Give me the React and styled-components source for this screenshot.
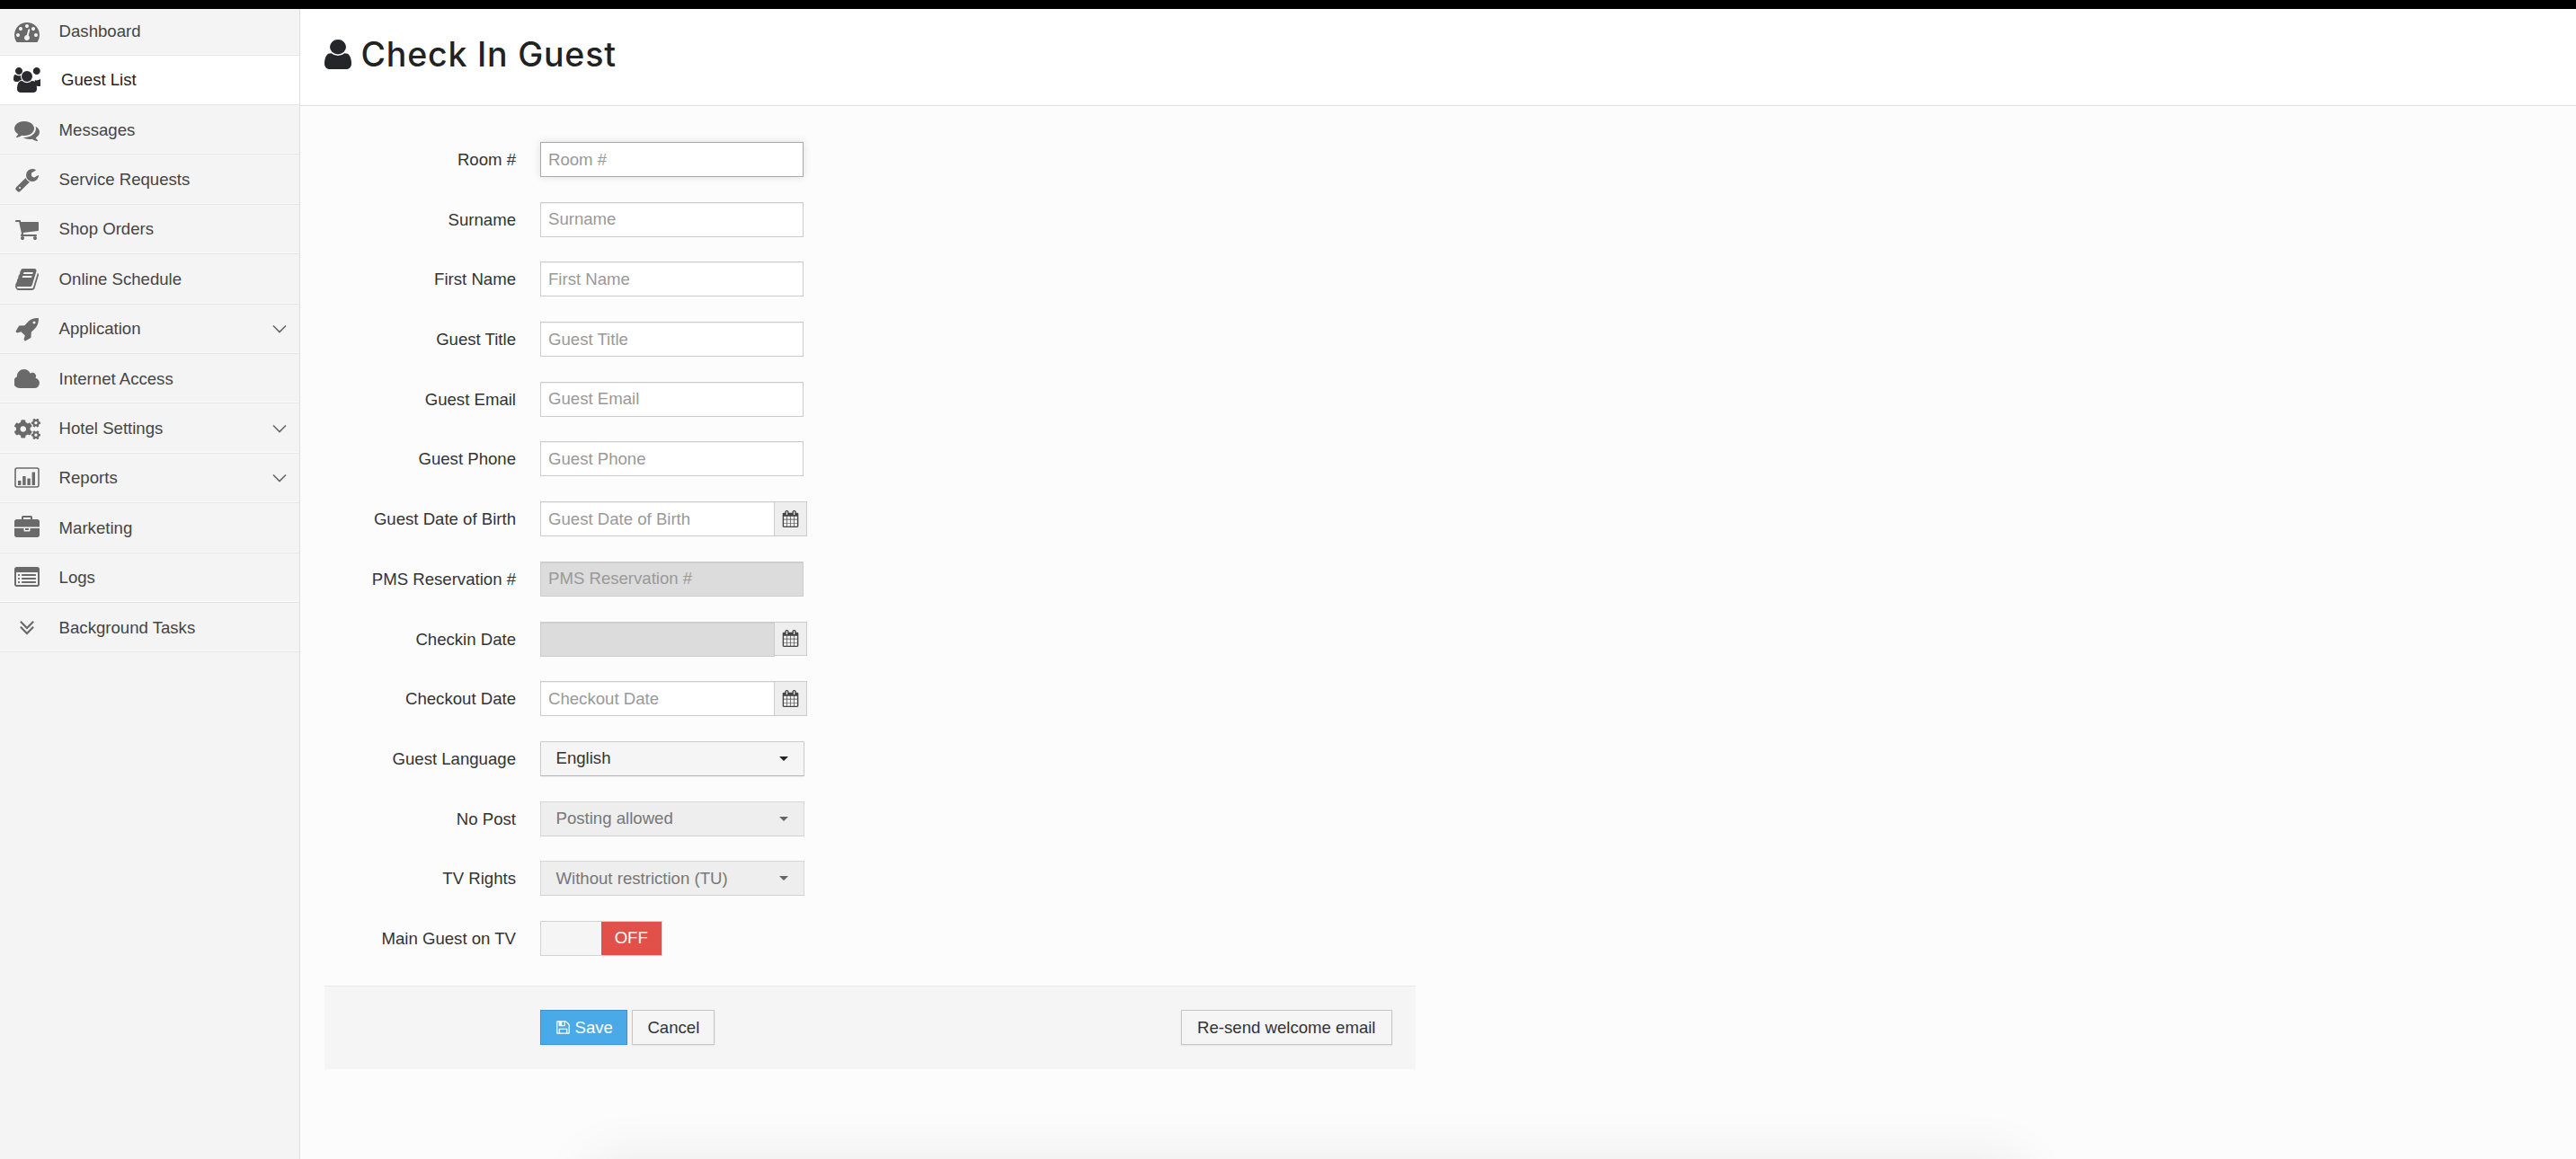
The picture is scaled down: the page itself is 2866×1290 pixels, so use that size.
import React from "react";
import styled, { createGlobalStyle } from "styled-components";
import { FaCogs } from "react-icons/fa";

const Global = createGlobalStyle`
  html, body { margin: 0; padding: 0; height: 100%; background: #fcfcfc; }
  * { box-sizing: border-box; }
  body { font-family: "Liberation Sans", Arial, sans-serif; font-size: 18.6px; color: #333; overflow: hidden; }
`;

const Page = styled.div`
  position: relative;
  height: 1290px;
  display: flex;
  flex-direction: column;
  overflow: hidden;
`;
const TopBar = styled.div`
  height: 10px;
  background: #000;
  flex: none;
`;
const Body = styled.div`
  flex: 1;
  display: flex;
  min-height: 0;
`;
const Sidebar = styled.nav`
  width: 334px;
  flex: none;
  background: #f4f4f4;
  border-right: 1px solid #dfdfdf;
`;
const NavItem = styled.a`
  display: flex;
  align-items: center;
  height: ${(p) => (p.$first ? "51.6px" : "55.4px")};
  background: ${(p) => (p.$active ? "#fff" : "transparent")};
  color: ${(p) => (p.$active ? "#222" : "#444")};
  border-bottom: 1px solid #e6e6e6;
  box-shadow: inset 0 -1px 0 ${(p) => (p.$active ? "#fff" : "#f9f9f9")};
  padding-top: ${(p) => (p.$first ? "0" : "1px")};
  font-size: 18.6px;
`;
const NavIconBox = styled.span`
  width: 60px;
  flex: none;
  display: flex;
  justify-content: center;
  color: ${(p) => (p.$active ? "#2a2a2e" : "#6a6a6a")};
`;
const NavLabel = styled.span`
  flex: 1;
  padding-left: ${(p) => (p.$active ? "8px" : "5.6px")};
`;
const Chevron = styled.svg`
  width: 16px;
  height: 10px;
  margin-right: 14px;
  fill: none;
  stroke: #666;
  stroke-width: 1.6;
`;
const Main = styled.main`
  flex: 1;
  min-width: 0;
  display: flex;
  flex-direction: column;
`;
const Header = styled.header`
  height: 108px;
  flex: none;
  background: #fff;
  border-bottom: 1px solid #e1e1e1;
  display: flex;
  align-items: center;
  padding: 0 0 6px 26.5px;
  color: #25262a;
`;
const HeaderGlyph = styled.svg`
  width: 30px;
  height: 33px;
  flex: none;
  fill: currentColor;
`;
const Title = styled.h1`
  margin: 0 0 0 11px;
  font-family: "Inter", "Liberation Sans", sans-serif;
  font-size: 37.5px;
  font-weight: 500;
  line-height: 1;
  letter-spacing: 0.8px;
  color: #222;
`;
const Form = styled.form`
  width: 1214px;
  margin: 40px 0 0 27px;
`;
const Row = styled.div`
  display: flex;
  align-items: center;
  height: 39px;
  margin-bottom: 27.7px;
`;
const Label = styled.label`
  width: 213px;
  margin-right: 27px;
  padding-top: 1px;
  flex: none;
  text-align: right;
  color: #333;
`;
const TextInput = styled.input`
  width: ${(p) => (p.$group ? "261px" : "293px")};
  height: 39px;
  padding: 0 8px;
  font: inherit;
  color: #333;
  background: ${(p) => (p.disabled ? "#dcdcdc" : "#fff")};
  border: 1px solid ${(p) => (p.$focus ? "#a9a9a9" : "#ccc")};
  border-radius: 0;
  outline: none;
  box-shadow: ${(p) =>
    p.$focus ? "0 0 9px rgba(0,0,0,.12)" : "inset 0 1px 1px rgba(0,0,0,.06)"};
  &::placeholder { color: #999; opacity: 1; }
`;
const InputGroup = styled.div`
  display: flex;
  align-items: flex-start;
`;
const Addon = styled.span`
  width: 36px;
  height: 38.7px;
  display: flex;
  align-items: center;
  justify-content: center;
  background: #eee;
  border: 1px solid #ccc;
  border-left: none;
  color: #444;
`;
const Select = styled.button`
  width: 293.5px;
  height: 39px;
  display: flex;
  align-items: center;
  justify-content: space-between;
  padding: 0 17px 0 16.5px;
  font: inherit;
  background: ${(p) => (p.disabled ? "#eee" : "#f5f5f5")};
  color: ${(p) => (p.disabled ? "#777" : "#333")};
  border: 1px solid ${(p) => (p.disabled ? "#d6d6d6" : "#ccc")};
  border-bottom-color: ${(p) => (p.disabled ? "#d0d0d0" : "#b5b5b5")};
  box-shadow: ${(p) => (p.disabled ? "none" : "0 1px 2px rgba(0,0,0,.05)")};
`;
const Caret = styled.span`
  width: 0;
  height: 0;
  border-left: 5px solid transparent;
  border-right: 5px solid transparent;
  border-top: 5px solid ${(p) => (p.$muted ? "#666" : "#222")};
`;
const Toggle = styled.div`
  width: 135.5px;
  height: 39px;
  display: flex;
  border: 1px solid #d2d2d2;
  background: #f5f5f5;
`;
const ToggleOff = styled.span`
  margin-left: auto;
  width: 66.5px;
  background: #e2504a;
  color: #fff;
  display: flex;
  align-items: center;
  justify-content: center;
`;
const Footer = styled.div`
  display: flex;
  align-items: center;
  height: 93px;
  margin-top: 33px;
  padding: 0 26.5px 0 240px;
  background: #f5f5f5;
  border-top: 1px solid #e8e8e8;
`;
const Button = styled.button`
  height: 39px;
  padding: 0 ${(p) => (p.$primary ? "15.5px" : p.$right ? "17px" : "16px")};
  display: inline-flex;
  align-items: center;
  gap: 5px;
  font: inherit;
  color: ${(p) => (p.$primary ? "#fff" : "#333")};
  background: ${(p) => (p.$primary ? "#4aa9e7" : "#f5f5f5")};
  border: 1px solid ${(p) => (p.$primary ? "#3d92d0" : "#c6c6c6")};
  border-radius: 0;
  box-shadow: 0 1px 2px rgba(0,0,0,.08);
  margin-right: ${(p) => (p.$gap ? "5px" : "0")};
  margin-left: ${(p) => (p.$right ? "auto" : "0")};
`;
const WindowShadow = styled.div`
  position: absolute;
  left: 665px;
  right: 625px;
  top: 1305px;
  height: 40px;
  border-radius: 40px;
  box-shadow: 0 0 60px 18px rgba(0,0,0,.07);
`;

const P = {
  dashboard: ["0 0 1792 1792", "M384 1152q0-53-37.5-90.5t-90.5-37.5-90.5 37.5-37.5 90.5 37.5 90.5 90.5 37.5 90.5-37.5 37.5-90.5zm192-448q0-53-37.5-90.5t-90.5-37.5-90.5 37.5-37.5 90.5 37.5 90.5 90.5 37.5 90.5-37.5 37.5-90.5zm428 481l101-382q6-26-7.5-48.5t-38.5-29.5-48 6.5-30 39.5l-101 382q-60 5-107 43.5t-63 98.5q-20 77 20 146t117 89 146-20 89-117q16-60-6-117t-72-91zm660-33q0-53-37.5-90.5t-90.5-37.5-90.5 37.5-37.5 90.5 37.5 90.5 90.5 37.5 90.5-37.5 37.5-90.5zm-640-640q0-53-37.5-90.5t-90.5-37.5-90.5 37.5-37.5 90.5 37.5 90.5 90.5 37.5 90.5-37.5 37.5-90.5zm448 192q0-53-37.5-90.5t-90.5-37.5-90.5 37.5-37.5 90.5 37.5 90.5 90.5 37.5 90.5-37.5 37.5-90.5zm320 448q0 261-141 483-19 29-54 29h-1402q-35 0-54-29-141-221-141-483 0-182 71-348t191-286 286-191 348-71 348 71 286 191 191 286 71 348z"],
  users: ["0 0 1920 1792", "M593 896q-162 5-265 128h-134q-82 0-138-40.5t-56-118.5q0-353 124-353 6 0 43.5 21t97.5 42.5 119 21.5q67 0 133-23-5 37-5 66 0 139 81 256zm1071 637q0 120-73 189.5t-194 69.5h-874q-121 0-194-69.5t-73-189.5q0-53 3.5-103.5t14-109 26.5-108.5 43-97.5 62-81 85.5-53.5 111.5-20q10 0 43 21.5t73 48 107 48 135 21.5 135-21.5 107-48 73-48 43-21.5q61 0 111.5 20t85.5 53.5 62 81 43 97.5 26.5 108.5 14 109 3.5 103.5zm-1024-1277q0 106-75 181t-181 75-181-75-75-181 75-181 181-75 181 75 75 181zm704 384q0 159-112.5 271.5t-271.5 112.5-271.5-112.5-112.5-271.5 112.5-271.5 271.5-112.5 271.5 112.5 112.5 271.5zm688 549q0 78-56 118.5t-138 40.5h-134q-103-123-265-128 81-117 81-256 0-29-5-66 66 23 133 23 59 0 119-21.5t97.5-42.5 43.5-21q124 0 124 353zm-128-933q0 106-75 181t-181 75-181-75-75-181 75-181 181-75 181 75 75 181z"],
  comments: ["0 0 1792 1792", "M1408 768q0 139-94 257t-256.5 186.5-353.5 68.5q-86 0-176-16-124 88-278 128-36 9-86 16h-3q-11 0-20.5-8t-11.5-21q-1-3-1-6.5t.5-6.5 2-6l2.5-5 3.5-5.5 4-5 4.5-5 4-4.5q5-6 23-25t26-29.5 22.5-29 25-38.5 20.5-44q-124-72-195-177t-71-224q0-139 94-257t256.5-186.5 353.5-68.5 353.5 68.5 256.5 186.5 94 257zm384 256q0 120-71 224.5t-195 176.5q10 24 20.5 44t25 38.5 22.5 29 26 29.5 23 25q1 1 4 4.5t4.5 5 4 5 3.5 5.5l2.5 5 2 6 .5 6.5-1 6.5q-3 14-13 22t-22 7q-50-7-86-16-154-40-278-128-90 16-176 16-271 0-472-132 58 4 88 4 161 0 309-45t264-129q125-92 192-212t67-254q0-77-23-152 129 71 204 178t75 230z"],
  wrench: ["0 0 1792 1792", "M448 1472q0-26-19-45t-45-19-45 19-19 45 19 45 45 19 45-19 19-45zm644-420l-682 682q-37 37-90 37-52 0-91-37l-106-108q-38-36-38-90 0-53 38-91l681-681q39 98 114.5 173.5t173.5 114.5zm634-435q0 39-23 106-47 134-164.5 217.5t-258.5 83.5q-185 0-316.5-131.5t-131.5-316.5 131.5-316.5 316.5-131.5q58 0 121.5 16.5t107.5 46.5q16 11 16 28t-16 28l-293 169v224l193 107q5-3 79-48.5t135.5-81 70.5-35.5q15 0 23.5 10t8.5 25z"],
  cart: ["0 0 1792 1792", "M704 1536q0 52-38 90t-90 38-90-38-38-90 38-90 90-38 90 38 38 90zm896 0q0 52-38 90t-90 38-90-38-38-90 38-90 90-38 90 38 38 90zm128-1088v512q0 24-16.5 42.5t-40.5 21.5l-1044 122q13 60 13 70 0 16-24 64h920q26 0 45 19t19 45-19 45-45 19h-1024q-26 0-45-19t-19-45q0-11 8-31.5t16-36 21.5-40 15.5-29.5l-177-823h-204q-26 0-45-19t-19-45 19-45 45-19h256q16 0 28.5 6.5t19.5 15.5 13 24.5 8 26 5.5 29.5 4.5 26h1201q26 0 45 19t19 45z"],
  book: ["0 0 1792 1792", "M1703 478q40 57 18 129l-275 906q-19 64-76.5 107.5t-122.5 43.5h-923q-77 0-148.5-53.5t-99.5-131.5q-24-67-2-127 0-4 3-27t4-37q1-8-3-21.5t-3-19.5q2-11 8-21t16.5-23.5 16.5-23.5q23-38 45-91.5t30-91.5q3-10 .5-30t-.5-28q3-11 17-28t17-23q21-36 42-92t25-90q1-9-2.5-32t.5-28q4-13 22-30.5t22-22.5q19-26 42.5-84.5t27.5-96.5q1-8-3-25.5t-2-26.5q2-8 9-18t18-23 17-21q8-12 16.5-30.5t15-35 16-36 19.5-32 26.5-23.5 36-11.5 47.5 5.5l-1 3q38-9 51-9h761q74 0 114 56t18 130l-274 906q-36 119-71.5 153.5t-128.5 34.5h-869q-27 0-38 15-11 16-1 43 24 70 144 70h923q29 0 56-15.5t35-41.5l300-987q7-22 5-57 38 15 59 43zm-1064 2q-4 13 2 22.5t20 9.5h608q13 0 25.5-9.5t16.5-22.5l21-64q4-13-2-22.5t-20-9.5h-608q-13 0-25.5 9.5t-16.5 22.5zm-83 256q-4 13 2 22.5t20 9.5h608q13 0 25.5-9.5t16.5-22.5l21-64q4-13-2-22.5t-20-9.5h-608q-13 0-25.5 9.5t-16.5 22.5z"],
  rocket: ["0 0 1792 1792", "M1504 448q0-40-28-68t-68-28-68 28-28 68 28 68 68 28 68-28 28-68zm224-288q0 249-75.5 430.5t-253.5 360.5q-81 80-195 176l-20 379q-2 16-16 26l-384 224q-7 4-16 4-12 0-23-9l-64-64q-13-14-8-32l85-276-281-281-276 85q-3 1-9 1-14 0-23-9l-64-64q-17-19-5-39l224-384q10-14 26-16l379-20q96-114 176-195 188-187 358-258t431-71q14 0 24 9.5t10 22.5z"],
  cloud: ["0 0 1920 1792", "M1856 1216q0 159-112.5 271.5t-271.5 112.5h-1088q-185 0-316.5-131.5t-131.5-316.5q0-132 71-241.5t187-163.5q-2-28-2-43 0-212 150-362t362-150q158 0 286.5 88t187.5 230q70-62 166-62 106 0 181 75t75 181q0 75-41 138 129 30 213 134.5t84 239.5z"],
  briefcase: ["0 0 1792 1792", "M640 256h512v-128h-512v128zm1152 640v480q0 66-47 113t-113 47h-1472q-66 0-113-47t-47-113v-480h672v160q0 26 19 45t45 19h320q26 0 45-19t19-45v-160h672zm-768 0v128h-256v-128h256zm768-480v384h-1792v-384q0-66 47-113t113-47h352v-160q0-40 28-68t68-28h576q40 0 68 28t28 68v160h352q66 0 113 47t47 113z"],
  list: ["0 0 1792 1792", "M384 1184v64q0 13-9.5 22.5t-22.5 9.5h-64q-13 0-22.5-9.5t-9.5-22.5v-64q0-13 9.5-22.5t22.5-9.5h64q13 0 22.5 9.5t9.5 22.5zm0-256v64q0 13-9.5 22.5t-22.5 9.5h-64q-13 0-22.5-9.5t-9.5-22.5v-64q0-13 9.5-22.5t22.5-9.5h64q13 0 22.5 9.5t9.5 22.5zm0-256v64q0 13-9.5 22.5t-22.5 9.5h-64q-13 0-22.5-9.5t-9.5-22.5v-64q0-13 9.5-22.5t22.5-9.5h64q13 0 22.5 9.5t9.5 22.5zm1152 512v64q0 13-9.5 22.5t-22.5 9.5h-960q-13 0-22.5-9.5t-9.5-22.5v-64q0-13 9.5-22.5t22.5-9.5h960q13 0 22.5 9.5t9.5 22.5zm0-256v64q0 13-9.5 22.5t-22.5 9.5h-960q-13 0-22.5-9.5t-9.5-22.5v-64q0-13 9.5-22.5t22.5-9.5h960q13 0 22.5 9.5t9.5 22.5zm0-256v64q0 13-9.5 22.5t-22.5 9.5h-960q-13 0-22.5-9.5t-9.5-22.5v-64q0-13 9.5-22.5t22.5-9.5h960q13 0 22.5 9.5t9.5 22.5zm128 704v-832q0-13-9.5-22.5t-22.5-9.5h-1472q-13 0-22.5 9.5t-9.5 22.5v832q0 13 9.5 22.5t22.5 9.5h1472q13 0 22.5-9.5t9.5-22.5zm128-1088v1088q0 66-47 113t-113 47h-1472q-66 0-113-47t-47-113v-1088q0-66 47-113t113-47h1472q66 0 113 47t47 113z"],
  doubleDown: ["0 0 1792 1792", "M1395 864q0 13-10 23l-466 466q-10 10-23 10t-23-10l-466-466q-10-10-10-23t10-23l50-50q10-10 23-10t23 10l393 393 393-393q10-10 23-10t23 10l50 50q10 10 10 23zm0-384q0 13-10 23l-466 466q-10 10-23 10t-23-10l-466-466q-10-10-10-23t10-23l50-50q10-10 23-10t23 10l393 393 393-393q10-10 23-10t23 10l50 50q10 10 10 23z"],
  calendar: ["0 0 1792 1792", "M192 1664h288v-288h-288v288zm352 0h320v-288h-320v288zm-352-352h288v-320h-288v320zm352 0h320v-320h-320v320zm-352-384h288v-288h-288v288zm736 736h320v-288h-320v288zm-384-736h320v-288h-320v288zm768 736h288v-288h-288v288zm-384-352h320v-320h-320v320zm-352-864v-288q0-13-9.5-22.5t-22.5-9.5h-64q-13 0-22.5 9.5t-9.5 22.5v288q0 13 9.5 22.5t22.5 9.5h64q13 0 22.5-9.5t9.5-22.5zm736 864h288v-320h-288v320zm-384-384h320v-288h-320v288zm384 0h288v-288h-288v288zm32-480v-288q0-13-9.5-22.5t-22.5-9.5h-64q-13 0-22.5 9.5t-9.5 22.5v288q0 13 9.5 22.5t22.5 9.5h64q13 0 22.5-9.5t9.5-22.5zm384-64v1280q0 52-38 90t-90 38h-1408q-52 0-90-38t-38-90v-1280q0-52 38-90t90-38h128v-96q0-66 47-113t113-47h64q66 0 113 47t47 113v96h384v-96q0-66 47-113t113-47h64q66 0 113 47t47 113v96h128q52 0 90 38t38 90z"],
  save: ["0 0 1792 1792", "M512 1536h768v-384h-768v384zm896 0h128v-896q0-14-10-38.5t-20-34.5l-281-281q-10-10-34-20t-39-10v416q0 40-28 68t-68 28h-576q-40 0-68-28t-28-68v-416h-128v1280h128v-416q0-40 28-68t68-28h832q40 0 68 28t28 68v416zm-384-928v-320q0-13-9.5-22.5t-22.5-9.5h-192q-13 0-22.5 9.5t-9.5 22.5v320q0 13 9.5 22.5t22.5 9.5h192q13 0 22.5-9.5t9.5-22.5zm640 32v928q0 40-28 68t-68 28h-1344q-40 0-68-28t-28-68v-1344q0-40 28-68t68-28h928q40 0 88 20t76 48l280 280q28 28 48 76t20 88z"],
};

const USER_PATH = "M1536 1399q0 109-62.5 187t-150.5 78h-854q-88 0-150.5-78t-62.5-187q0-85 8.5-160.5t31.5-152 58.5-131 94-89 134.5-34.5q131 128 313 128t313-128q76 0 134.5 34.5t94 89 58.5 131 31.5 152 8.5 160.5zm-256-887q0 159-112.5 271.5t-271.5 112.5-271.5-112.5-112.5-271.5 112.5-271.5 271.5-112.5 271.5 112.5 112.5 271.5z";

const Icon = ({ name, size = 28 }) => {
  const [vb, d] = P[name];
  const w = Number(vb.split(" ")[2]);
  return (
    <svg width={(size * w) / 1792} height={size} viewBox={vb} fill="currentColor" aria-hidden="true">
      <path d={d} />
    </svg>
  );
};

const ReportsIcon = () => (
  <svg width="28" height="24" viewBox="0 0 28 24" aria-hidden="true">
    <rect x="1" y="1" width="26" height="21" rx="2" fill="none" stroke="currentColor" strokeWidth="1.6" />
    <rect x="4" y="15" width="3.4" height="5" fill="currentColor" />
    <rect x="9.2" y="10" width="3.4" height="10" fill="currentColor" />
    <rect x="14.4" y="12.5" width="3.4" height="7.5" fill="currentColor" />
    <rect x="19.6" y="5.5" width="3.4" height="14.5" fill="currentColor" />
  </svg>
);

const NAV = [
  { label: "Dashboard", icon: <Icon name="dashboard" />, first: true },
  { label: "Guest List", icon: <Icon name="users" />, active: true },
  { label: "Messages", icon: <Icon name="comments" /> },
  { label: "Service Requests", icon: <Icon name="wrench" /> },
  { label: "Shop Orders", icon: <Icon name="cart" /> },
  { label: "Online Schedule", icon: <Icon name="book" /> },
  { label: "Application", icon: <Icon name="rocket" />, more: true },
  { label: "Internet Access", icon: <Icon name="cloud" size={27} /> },
  { label: "Hotel Settings", icon: <FaCogs size={29} />, more: true },
  { label: "Reports", icon: <ReportsIcon />, more: true },
  { label: "Marketing", icon: <Icon name="briefcase" /> },
  { label: "Logs", icon: <Icon name="list" /> },
  { label: "Background Tasks", icon: <Icon name="doubleDown" /> },
];

const Field = ({ label, children }) => (
  <Row>
    <Label>{label}</Label>
    {children}
  </Row>
);

const DateField = ({ label, placeholder, disabled }) => (
  <Field label={label}>
    <InputGroup>
      <TextInput $group placeholder={placeholder} disabled={disabled} readOnly />
      <Addon><Icon name="calendar" size={19} /></Addon>
    </InputGroup>
  </Field>
);

const SelectField = ({ label, value, disabled }) => (
  <Field label={label}>
    <Select type="button" disabled={disabled}>
      {value}
      <Caret $muted={disabled} />
    </Select>
  </Field>
);

export default function App() {
  return (
    <Page>
      <Global />
      <TopBar />
      <Body>
        <Sidebar>
          {NAV.map((n) => (
            <NavItem key={n.label} $active={n.active} $first={n.first}>
              <NavIconBox $active={n.active}>{n.icon}</NavIconBox>
              <NavLabel $active={n.active}>{n.label}</NavLabel>
              {n.more && (
                <Chevron viewBox="0 0 16 10"><polyline points="1,1.5 8,8.5 15,1.5" /></Chevron>
              )}
            </NavItem>
          ))}
        </Sidebar>
        <Main>
          <Header>
            <HeaderGlyph viewBox="256 128 1280 1536" preserveAspectRatio="none" aria-hidden="true">
              <path d={USER_PATH} />
            </HeaderGlyph>
            <Title>Check In Guest</Title>
          </Header>
          <Form onSubmit={(e) => e.preventDefault()}>
            <Field label="Room #"><TextInput $focus placeholder="Room #" readOnly /></Field>
            <Field label="Surname"><TextInput placeholder="Surname" readOnly /></Field>
            <Field label="First Name"><TextInput placeholder="First Name" readOnly /></Field>
            <Field label="Guest Title"><TextInput placeholder="Guest Title" readOnly /></Field>
            <Field label="Guest Email"><TextInput placeholder="Guest Email" readOnly /></Field>
            <Field label="Guest Phone"><TextInput placeholder="Guest Phone" readOnly /></Field>
            <DateField label="Guest Date of Birth" placeholder="Guest Date of Birth" />
            <Field label="PMS Reservation #"><TextInput disabled placeholder="PMS Reservation #" /></Field>
            <DateField label="Checkin Date" disabled />
            <DateField label="Checkout Date" placeholder="Checkout Date" />
            <SelectField label="Guest Language" value="English" />
            <SelectField label="No Post" value="Posting allowed" disabled />
            <SelectField label="TV Rights" value="Without restriction (TU)" disabled />
            <Field label="Main Guest on TV">
              <Toggle><ToggleOff>OFF</ToggleOff></Toggle>
            </Field>
            <Footer>
              <Button $primary $gap type="button"><Icon name="save" size={17} />Save</Button>
              <Button type="button">Cancel</Button>
              <Button $right type="button">Re-send welcome email</Button>
            </Footer>
          </Form>
        </Main>
      </Body>
      <WindowShadow />
    </Page>
  );
}
